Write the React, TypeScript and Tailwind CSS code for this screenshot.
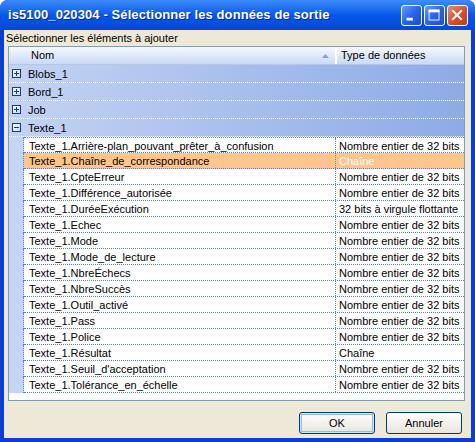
import React from 'react';

type Child = { name: string; type: string; selected?: boolean };

const groups = ['Blobs_1', 'Bord_1', 'Job'];

const children: Child[] = [
  { name: 'Texte_1.Arrière-plan_pouvant_prêter_à_confusion', type: 'Nombre entier de 32 bits' },
  { name: 'Texte_1.Chaîne_de_correspondance', type: 'Chaîne', selected: true },
  { name: 'Texte_1.CpteErreur', type: 'Nombre entier de 32 bits' },
  { name: 'Texte_1.Différence_autorisée', type: 'Nombre entier de 32 bits' },
  { name: 'Texte_1.DuréeExécution', type: '32 bits à virgule flottante' },
  { name: 'Texte_1.Echec', type: 'Nombre entier de 32 bits' },
  { name: 'Texte_1.Mode', type: 'Nombre entier de 32 bits' },
  { name: 'Texte_1.Mode_de_lecture', type: 'Nombre entier de 32 bits' },
  { name: 'Texte_1.NbreÉchecs', type: 'Nombre entier de 32 bits' },
  { name: 'Texte_1.NbreSuccès', type: 'Nombre entier de 32 bits' },
  { name: 'Texte_1.Outil_activé', type: 'Nombre entier de 32 bits' },
  { name: 'Texte_1.Pass', type: 'Nombre entier de 32 bits' },
  { name: 'Texte_1.Police', type: 'Nombre entier de 32 bits' },
  { name: 'Texte_1.Résultat', type: 'Chaîne' },
  { name: 'Texte_1.Seuil_d\'acceptation', type: 'Nombre entier de 32 bits' },
  { name: 'Texte_1.Tolérance_en_échelle', type: 'Nombre entier de 32 bits' },
];

// Small +/- expander box
const Expander: React.FC<{ open?: boolean }> = ({ open }) => (
  <svg width="9" height="9" viewBox="0 0 9 9" className="shrink-0">
    <defs>
      <linearGradient id={open ? 'exo' : 'exc'} x1="0" y1="0" x2="1" y2="1">
        <stop offset="0" stopColor="#ffffff" />
        <stop offset="1" stopColor="#c6d3ee" />
      </linearGradient>
    </defs>
    <rect x="0.5" y="0.5" width="8" height="8" fill={`url(#${open ? 'exo' : 'exc'})`} stroke="#1c3a78" />
    <rect x="2" y="4" width="5" height="1" fill="#1c3a78" />
    {!open && <rect x="4" y="2" width="1" height="5" fill="#1c3a78" />}
  </svg>
);

const GroupRow: React.FC<{ label: string; open?: boolean }> = ({ label, open }) => (
  <div className="h-[18px] shrink-0 flex items-center pl-[3px] border-b border-dotted border-white bg-gradient-to-r from-[#c3d3f3] to-[#8eabe6]">
    <Expander open={open} />
    <span className="pl-[7px] pt-[1px] text-black">{label}</span>
  </div>
);

const ChildRow: React.FC<{ item: Child; first?: boolean }> = ({ item, first }) => (
  <div className="h-[16px] shrink-0 flex">
    <div className="w-[15px] shrink-0 bg-[#c4d6f6] border-r border-dotted border-[#5f80c8]" />
    <div
      className={`flex flex-1 min-w-0 border-b border-dotted border-[#5f80c8] ${
        first ? 'border-t' : ''
      } ${item.selected ? 'bg-[#ffc58c]' : 'bg-white'}`}
    >
      <div className="w-[312px] shrink-0 pl-[5px] pt-[1px] border-r border-dotted border-[#5f80c8] text-black whitespace-nowrap overflow-hidden leading-[14px]">
        {item.name}
      </div>
      <div
        className={`flex-1 min-w-0 pl-[3px] pt-[1px] leading-[14px] whitespace-nowrap overflow-hidden ${
          item.selected ? 'text-white' : 'text-black'
        }`}
      >
        {item.type}
      </div>
    </div>
  </div>
);

const TitleButton: React.FC<{ kind: 'min' | 'max' | 'close' }> = ({ kind }) => {
  const base =
    kind === 'close'
      ? 'bg-gradient-to-br from-[#e98a6c] via-[#d9522c] to-[#c13a14]'
      : 'bg-gradient-to-br from-[#6b9cf8] via-[#2a63e8] to-[#1c4fd6]';
  return (
    <div
      className={`w-[21px] h-[21px] rounded-[3px] border border-white flex items-center justify-center ${base}`}
    >
      {kind === 'min' && (
        <svg width="21" height="21" viewBox="0 0 21 21">
          <rect x="5" y="13" width="7" height="3" fill="#fff" />
        </svg>
      )}
      {kind === 'max' && (
        <svg width="21" height="21" viewBox="0 0 21 21">
          <rect x="4.5" y="4.5" width="11" height="11" fill="none" stroke="#fff" />
          <rect x="4" y="4" width="12" height="3" fill="#fff" />
        </svg>
      )}
      {kind === 'close' && (
        <svg width="21" height="21" viewBox="0 0 21 21">
          <path d="M5.5 5.5 L14.5 14.5 M14.5 5.5 L5.5 14.5" stroke="#fff" strokeWidth="2.2" strokeLinecap="square" />
        </svg>
      )}
    </div>
  );
};

const XpButton: React.FC<{ label: string; isDefault?: boolean }> = ({ label, isDefault }) => (
  <button
    className={`w-[76px] h-[22px] rounded-[3px] border border-[#003c74] bg-gradient-to-b from-white to-[#e6e4dc] text-[11px] text-black flex items-center justify-center ${
      isDefault ? 'shadow-[inset_0_0_0_1px_#cee7ff,inset_0_0_0_2px_#98b8ea]' : ''
    }`}
  >
    {label}
  </button>
);

export default function App() {
  return (
    <div
      className="w-[475px] h-[442px] flex flex-col rounded-t-[8px] bg-[#0a3ed6] overflow-hidden"
      style={{ fontFamily: '"Liberation Sans", Arial, sans-serif' }}
    >
      {/* Title bar */}
      <div className="h-[30px] shrink-0 flex items-center pl-[8px] pr-[7px] bg-gradient-to-b from-[#3d8bfb] via-[#0658ea] to-[#0448d6]">
        <span className="flex-1 text-white font-bold text-[13px] tracking-[0.1px] [text-shadow:1px_1px_0_#0a2a8a]">
          is5100_020304 - Sélectionner les données de sortie
        </span>
        <div className="flex gap-[2px]">
          <TitleButton kind="min" />
          <TitleButton kind="max" />
          <TitleButton kind="close" />
        </div>
      </div>

      {/* Client area */}
      <div className="flex-1 mx-[4px] mb-[4px] bg-[#ece9d8] flex flex-col text-[11px]">
        <div className="h-[16px] shrink-0 pl-[2px] pt-[2px] leading-[13px] text-black">
          Sélectionner les éléments à ajouter
        </div>

        <div className="ml-[4px] mr-[6px] h-[355px] shrink-0 border border-[#7f9db9] bg-white flex flex-col overflow-hidden">
          {/* Header */}
          <div className="h-[18px] shrink-0 flex bg-gradient-to-b from-[#f6f9fd] to-[#cbd9f4] border-b border-[#b5c6e6]">
            <div className="w-[328px] shrink-0 flex items-center pl-[22px] pr-[6px] border-r-2 border-white">
              <span className="flex-1 text-black">Nom</span>
              <svg width="7" height="4" viewBox="0 0 7 4">
                <path d="M0 4 L3.5 0 L7 4 Z" fill="#8aa3cf" />
              </svg>
            </div>
            <div className="flex-1 flex items-center pl-[4px] text-black">Type de données</div>
          </div>

          {groups.map(g => (
            <GroupRow key={g} label={g} />
          ))}
          <GroupRow label="Texte_1" open />

          {children.map((c, i) => (
            <ChildRow key={c.name} item={c} first={i === 0} />
          ))}
        </div>

        <div className="flex-1 flex items-start justify-end gap-[11px] pr-[9px] pt-[11px]">
          <XpButton label="OK" isDefault />
          <XpButton label="Annuler" />
        </div>
      </div>
    </div>
  );
}
